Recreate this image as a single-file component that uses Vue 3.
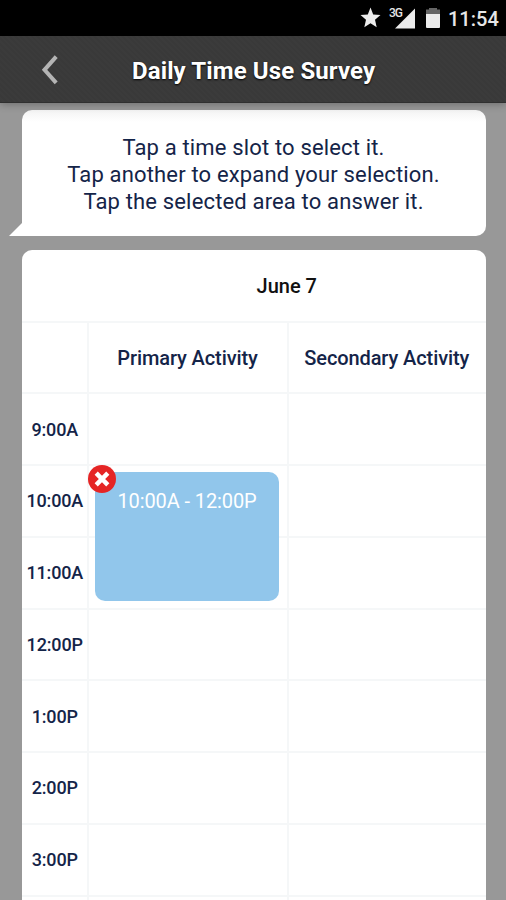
<script setup>
const rows = [
  { time: '9:00A' },
  { time: '10:00A', event: '10:00A - 12:00P' },
  { time: '11:00A' },
  { time: '12:00P' },
  { time: '1:00P' },
  { time: '2:00P' },
  { time: '3:00P' },
  { time: '' },
]
</script>

<template>
  <div class="screen">
    <div class="status">
      <svg class="status-icons" width="104" height="36" viewBox="0 0 104 36">
        <path class="lit" d="M10.500 7.500l2.700 7 7.300.6-5.500 4.700 1.700 7.500-6.200-4.100L4.300 27.300 6 19.800.5 15.100l7.300-.6z" />
        <path class="lit" d="M55 8.500V28.500H35z" />
        <path class="dim" d="M69 8h8v1.500h3V14H66V9.500h3z" />
        <path class="lit" d="M66 14h14V27q0 1-1 1h-12q-1 0-1-1z" />
      </svg>
      <span class="network">3G</span>
      <span class="clock">11:54</span>
    </div>
    <header class="bar">
      <svg class="back" width="20" height="32" viewBox="0 0 20 32">
        <path d="M16.200 2.600L4.500 15.800l11.700 13" />
      </svg>
      <h1>Daily Time Use Survey</h1>
    </header>
    <main class="content">
      <section class="bubble">
        <p>Tap a time slot to select it.</p>
        <p>Tap another to expand your selection.</p>
        <p>Tap the selected area to answer it.</p>
        <svg class="tail" width="14" height="14" viewBox="0 0 14 14"><path d="M13 1h1v13H0z" /></svg>
      </section>
      <section class="sheet">
        <div class="row day">
          <div></div>
          <div class="date"><span>June 7</span></div>
        </div>
        <div class="row heads">
          <div class="cell"></div>
          <div class="cell"><span>Primary Activity</span></div>
          <div class="cell"><span>Secondary Activity</span></div>
        </div>
        <div v-for="(row, i) in rows" :key="i" class="row">
          <div class="cell time"><span>{{ row.time }}</span></div>
          <div class="cell">
            <div v-if="row.event" class="event">
              <span>{{ row.event }}</span>
              <svg class="close" width="28" height="28" viewBox="0 0 28 28">
                <circle cx="14" cy="14" r="14" />
                <path d="M8.200 8.200l11.600 11.600M19.800 8.200L8.200 19.800" />
              </svg>
            </div>
          </div>
          <div class="cell"></div>
        </div>
      </section>
    </main>
  </div>
</template>

<style>
body {
  overflow: hidden;
}
</style>

<style scoped>
.screen {
  width: 506px;
  height: 900px;
  overflow: hidden;
  display: flex;
  flex-direction: column;
  background: #989898;
  color: #142448;
  font-family: Roboto, sans-serif;
}
.status {
  position: relative;
  flex: none;
  height: 36px;
  display: flex;
  align-items: center;
  justify-content: flex-end;
  background: #000;
  color: #e6e6e6;
}
.status-icons {
  margin-right: -16px;
}
.status-icons .lit {
  fill: #ececec;
}
.status-icons .dim {
  fill: #666;
}
.network {
  position: absolute;
  left: 389px;
  top: 7px;
  font-size: 12px;
  line-height: 12px;
  font-weight: 500;
  letter-spacing: -1px;
}
.clock {
  width: 58px;
  margin: 2px 0 0;
  font-size: 20px;
  font-weight: 500;
  white-space: nowrap;
}
.bar {
  position: relative;
  z-index: 1;
  flex: none;
  height: 67px;
  box-sizing: border-box;
  padding-left: 40px;
  display: flex;
  align-items: center;
  background: repeating-linear-gradient(45deg, #393939 0 2px, #3b3b3b 2px 4px);
  border-bottom: 1px solid #303030;
  box-shadow: 0 1px 8px rgba(0, 0, 0, 0.3);
}
.back {
  margin-top: 1px;
  fill: none;
  stroke: #b4b4b4;
  stroke-width: 4;
}
h1 {
  margin: 4px 0 0 72px;
  font-size: 24px;
  line-height: 28px;
  font-weight: 700;
  letter-spacing: 0.12px;
  color: #fff;
  white-space: nowrap;
  text-shadow: 0 1px 2px #000;
}
.content {
  padding: 7px 20.5px 0 21.5px;
}
.bubble {
  position: relative;
  height: 126px;
  box-sizing: border-box;
  padding-top: 24px;
  border-radius: 10px 10px 10px 0;
  background: linear-gradient(#f3f3f3, #fff 12px);
  text-align: center;
}
.bubble p {
  margin: 0;
  font-size: 22px;
  line-height: 27px;
  letter-spacing: 0.16px;
  white-space: nowrap;
}
.tail {
  position: absolute;
  left: -13px;
  bottom: 0;
  fill: #fff;
}
.sheet {
  height: 680px;
  margin-top: 14px;
  border-radius: 10px 10px 0 0;
  background: #fff;
}
.row {
  display: grid;
  grid-template-columns: 65.5px 200px 198.5px;
  height: 71.75px;
}
.day {
  height: 70.5px;
}
.date {
  grid-column: 2 / 4;
  display: flex;
  align-items: center;
  justify-content: center;
  padding: 1px 0 0 1px;
  font-size: 20px;
  font-weight: 500;
  color: #111;
}
.cell {
  position: relative;
  display: flex;
  align-items: center;
  justify-content: center;
  border-top: 2px solid #f5f7f8;
  border-left: 2px solid #f5f7f8;
}
.cell:first-child {
  border-left: 0;
}
.heads {
  font-size: 20px;
  font-weight: 500;
  letter-spacing: -0.1px;
  white-space: nowrap;
}
.heads .cell {
  padding: 1px 1px 0 0;
}
.cell.time {
  padding-left: 1px;
  font-size: 18px;
  font-weight: 500;
  letter-spacing: -0.15px;
}
.event {
  position: absolute;
  z-index: 1;
  left: 6px;
  top: 6px;
  width: 184px;
  height: 129px;
  box-sizing: border-box;
  padding-top: 16px;
  border-radius: 10px;
  background: rgba(137, 194, 233, 0.93);
  color: #fff;
  font-size: 20px;
  line-height: 26px;
  letter-spacing: -0.1px;
  text-align: center;
  white-space: nowrap;
}
.close {
  position: absolute;
  left: -7px;
  top: -7px;
}
.close circle {
  fill: #e52525;
}
.close path {
  stroke: #fff;
  stroke-width: 4.500;
}
</style>
